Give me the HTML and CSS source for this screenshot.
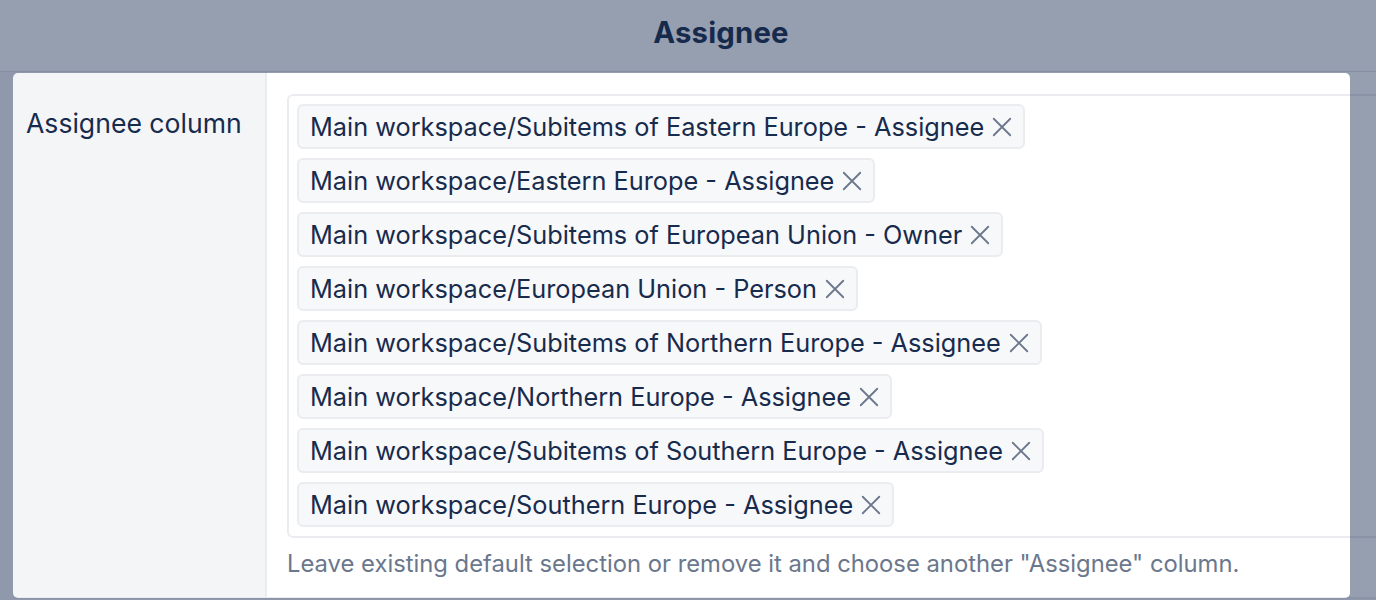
FILE: index.html
```html
<!DOCTYPE html>
<html lang="en">
<head>
<meta charset="utf-8">
<title>Assignee</title>
<link rel="stylesheet" href="styles.css">
</head>
<body>
<header class="topbar">
  <h1 class="title">Assignee</h1>
</header>
<section class="row">
  <div class="label-cell">Assignee column</div>
  <div class="value-cell">
    <div class="select-box">
      <span class="tag">Main workspace/Subitems of Eastern Europe - Assignee<span class="tag-x"><svg viewBox="0 0 16 16"><path d="M2 2L14 14M14 2L2 14"/></svg></span></span>
      <span class="tag">Main workspace/Eastern Europe - Assignee<span class="tag-x"><svg viewBox="0 0 16 16"><path d="M2 2L14 14M14 2L2 14"/></svg></span></span>
      <span class="tag">Main workspace/Subitems of European Union - Owner<span class="tag-x"><svg viewBox="0 0 16 16"><path d="M2 2L14 14M14 2L2 14"/></svg></span></span>
      <span class="tag">Main workspace/European Union - Person<span class="tag-x"><svg viewBox="0 0 16 16"><path d="M2 2L14 14M14 2L2 14"/></svg></span></span>
      <span class="tag">Main workspace/Subitems of Northern Europe - Assignee<span class="tag-x"><svg viewBox="0 0 16 16"><path d="M2 2L14 14M14 2L2 14"/></svg></span></span>
      <span class="tag">Main workspace/Northern Europe - Assignee<span class="tag-x"><svg viewBox="0 0 16 16"><path d="M2 2L14 14M14 2L2 14"/></svg></span></span>
      <span class="tag">Main workspace/Subitems of Southern Europe - Assignee<span class="tag-x"><svg viewBox="0 0 16 16"><path d="M2 2L14 14M14 2L2 14"/></svg></span></span>
      <span class="tag">Main workspace/Southern Europe - Assignee<span class="tag-x"><svg viewBox="0 0 16 16"><path d="M2 2L14 14M14 2L2 14"/></svg></span></span>
    </div>
    <p class="hint">Leave existing default selection or remove it and choose another "Assignee" column.</p>
  </div>
</section>
<div class="spotlight"></div>
</body>
</html>
```

FILE: styles.css
```css
html, body {
  margin: 0;
  padding: 0;
  height: 600px;
  overflow: hidden;
}
body {
  background: #f4f5f7;
  font-family: Inter, "Noto Sans", "Liberation Sans", sans-serif;
  color: #172b4d;
  position: relative;
}
.topbar {
  height: 72px;
  box-sizing: border-box;
  background: #ffffff;
  border-bottom: 1px solid #dfe1e6;
  display: flex;
  align-items: center;
  justify-content: center;
  padding: 0 0 6px 66px;
}
.title {
  margin: 0;
  font-size: 29.3px;
  font-weight: 700;
  letter-spacing: 0.2px;
  color: #172b4d;
}
.row {
  display: flex;
  margin-left: 13px;
  width: 1600px;
  background: #ffffff;
  border-bottom: 2px solid #ebecf0;
}
.label-cell {
  width: 254px;
  flex: none;
  box-sizing: border-box;
  height: 525px;
  background: #f4f5f7;
  border-right: 2px solid #ebecf0;
  padding: 35px 0 0 13px;
  font-size: 26.6px;
  line-height: 32px;
}
.value-cell {
  flex: 1;
  padding: 22px 0 0 20px;
}
.select-box {
  width: 1200px;
  border: 2px solid #ebecf0;
  border-radius: 6px;
  padding: 8px 8px 9px 8px;
  display: flex;
  flex-direction: column;
  align-items: flex-start;
  gap: 9px;
}
.tag {
  display: inline-flex;
  align-items: center;
  height: 45px;
  box-sizing: border-box;
  padding: 0 10px 0 11px;
  background: #f7f8fa;
  border: 2px solid #ebecf0;
  border-radius: 6px;
  font-size: 25.3px;
  color: #172b4d;
  white-space: nowrap;
}
.tag-x {
  display: inline-flex;
  width: 22px;
  height: 22px;
  margin-left: 7px;
}
.tag-x svg {
  width: 22px;
  height: 22px;
  fill: none;
  stroke: #6b778c;
  stroke-width: 1.3;
  stroke-linecap: round;
}
.hint {
  margin: 11px 0 0 0;
  font-size: 23.8px;
  line-height: 30px;
  color: #6b778c;
}
.spotlight {
  position: absolute;
  left: 13px;
  top: 73px;
  width: 1337px;
  height: 525px;
  border-radius: 5px;
  box-shadow: 0 0 0 3000px rgba(23, 43, 77, 0.45);
  pointer-events: none;
}
```
